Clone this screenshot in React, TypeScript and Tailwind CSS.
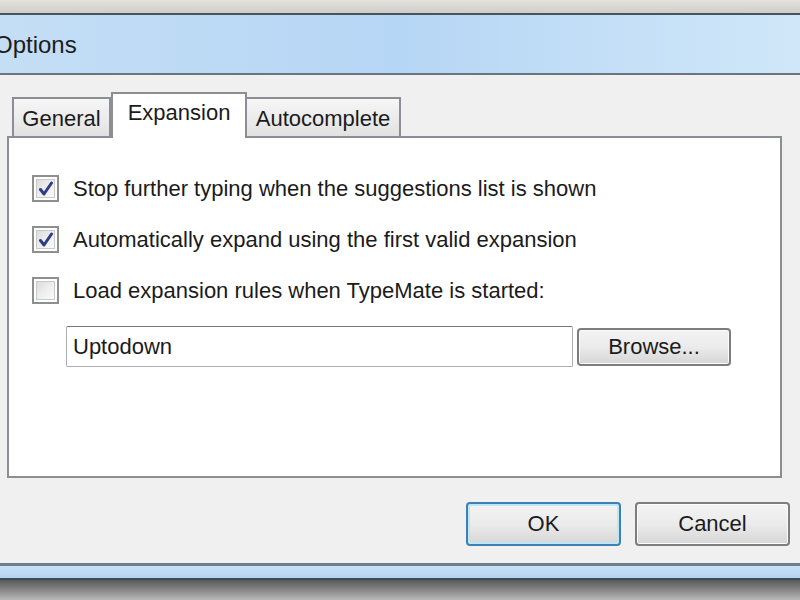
import React from 'react';

const font = { fontFamily: '"Segoe UI", "Liberation Sans", Arial, sans-serif' };

function CheckBox({ checked }: { checked: boolean }) {
  return (
    <div className="w-[27px] h-[27px] shrink-0 border-[2px] border-[#8e8f8f] bg-white p-[2px]">
      <div className="w-full h-full bg-gradient-to-br from-[#dcdcdc] via-[#eeeeee] to-[#fafafa] border border-[#c9c9c9] flex items-center justify-center">
        {checked && (
          <svg width="16" height="16" viewBox="0 0 16 16">
            <path d="M2.5 8.5 L6 13 L13.5 2" fill="none" stroke="#2f3d86" strokeWidth="3" strokeLinejoin="round" strokeLinecap="round" />
          </svg>
        )}
      </div>
    </div>
  );
}

function Option({ checked, label }: { checked: boolean; label: string }) {
  return (
    <div className="flex items-center gap-[14px] h-[27px]">
      <CheckBox checked={checked} />
      <span className="text-[22px] leading-none text-[#1b1b1b]">{label}</span>
    </div>
  );
}

function Button({ label, focused, className }: { label: string; focused?: boolean; className: string }) {
  return (
    <div
      className={`${className} rounded-[4px] border-[2px] flex items-center justify-center text-[22px] leading-none text-[#1b1b1b] bg-gradient-to-b from-[#f3f3f3] via-[#ebebeb] to-[#d6d6d6] ${
        focused ? 'border-[#3c80b4] shadow-[inset_0_0_0_2px_#bfe6f7]' : 'border-[#7d7d7d] shadow-[inset_0_0_0_1px_#fbfbfb]'
      }`}
    >
      {label}
    </div>
  );
}

export default function App() {
  return (
    <div className="w-[800px] h-[600px] overflow-hidden flex flex-col bg-[#f0f0f0]" style={font}>
      {/* outer frame top */}
      <div className="h-[13px] bg-gradient-to-b from-[#e4e2dc] to-[#cfcdc8]" />
      <div className="h-[2px] bg-[#4a525b]" />
      {/* title bar */}
      <div className="h-[58px] bg-gradient-to-r from-[#c4def5] via-[#b6d6f5] to-[#d0e7f9] flex items-center">
        <span className="-ml-[6px] text-[24px] leading-none text-[#1c1c1c] pt-[2px]">Options</span>
      </div>
      <div className="h-[2px] bg-[#6b7580]" />

      {/* dialog body */}
      <div className="h-[488px] flex flex-col pt-[17px]">
        {/* tabs */}
        <div className="flex items-end h-[44px] pl-[12px]">
          <div className="h-[39px] w-[99px] border-[2px] border-b-0 border-[#8c8e94] bg-gradient-to-b from-[#f6f6f6] to-[#e2e2e2] flex items-center justify-center text-[22px] leading-none text-[#1b1b1b] pt-[2px]">
            General
          </div>
          <div className="h-[46px] w-[136px] -mb-[2px] z-10 border-[2px] border-b-0 border-[#8c8e94] bg-white flex items-center justify-center text-[22px] leading-none text-[#1b1b1b] pb-[6px]">
            Expansion
          </div>
          <div className="h-[39px] w-[154px] border-[2px] border-b-0 border-l-0 border-[#8c8e94] bg-gradient-to-b from-[#f6f6f6] to-[#e2e2e2] flex items-center justify-center text-[22px] leading-none text-[#1b1b1b] pt-[2px]">
            Autocomplete
          </div>
        </div>

        {/* panel */}
        <div className="ml-[7px] w-[775px] h-[342px] border-[2px] border-[#8c8e94] bg-white pl-[23px] pt-[37px] flex flex-col gap-[24px]">
          <Option checked label="Stop further typing when the suggestions list is shown" />
          <Option checked label="Automatically expand using the first valid expansion" />
          <Option checked={false} label="Load expansion rules when TypeMate is started:" />
          <div className="flex items-center pl-[34px] -mt-[2px]">
            <div className="w-[507px] h-[41px] border border-[#abadb3] border-t-[#6f7886] rounded-[2px] bg-white flex items-center pl-[6px] text-[22px] leading-none text-[#1b1b1b]">
              Uptodown
            </div>
            <Button label="Browse..." className="ml-[4px] w-[154px] h-[38px]" />
          </div>
        </div>

        {/* buttons */}
        <div className="flex justify-end gap-[14px] pr-[10px] mt-[24px]">
          <Button label="OK" focused className="w-[155px] h-[44px]" />
          <Button label="Cancel" className="w-[155px] h-[44px]" />
        </div>
      </div>

      {/* outer frame bottom */}
      <div className="h-[3px] bg-[#6f7d8c]" />
      <div className="h-[12px] bg-gradient-to-b from-[#c6dff5] to-[#b6d4f0]" />
      <div className="h-[2px] bg-[#3e4a55]" />
      <div className="flex-1 bg-gradient-to-b from-[#5a5a5a] to-[#b8b8b8]" />
    </div>
  );
}
